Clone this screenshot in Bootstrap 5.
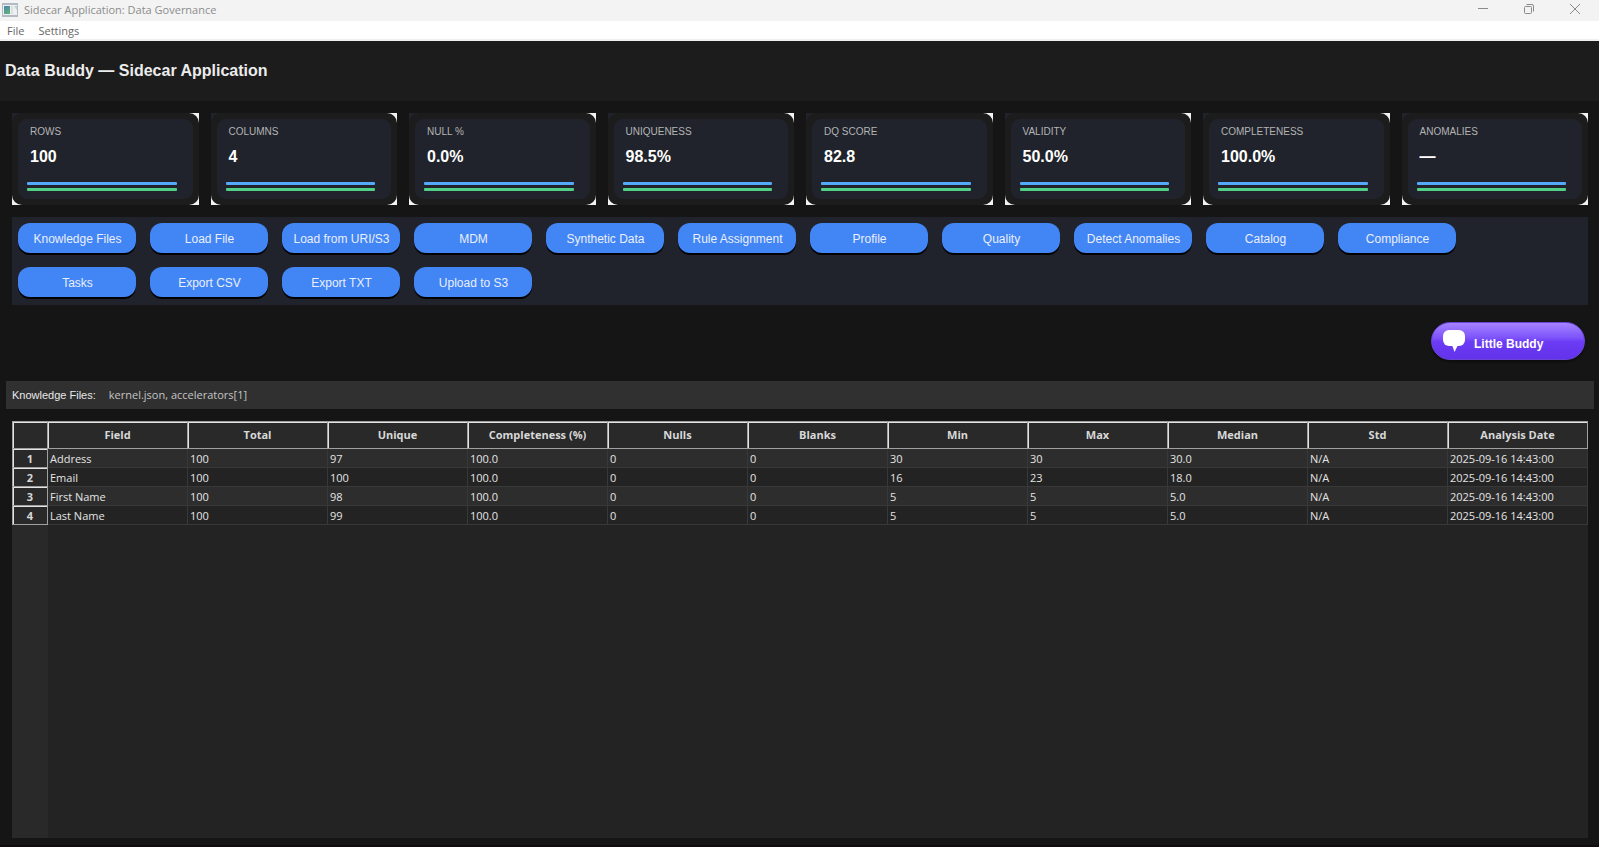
<!DOCTYPE html>
<html lang="en">
<head>
<meta charset="utf-8">
<meta name="viewport" content="width=device-width, initial-scale=1">
<title>Sidecar Application: Data Governance</title>
<link href="https://cdn.jsdelivr.net/npm/bootstrap@5.3.0/dist/css/bootstrap.min.css" rel="stylesheet">
<style>
:root{--ui:"Open Sans","Noto Sans",sans-serif;--arial:"Liberation Sans",Arial,sans-serif;--panel:#20232b;--light:#e3e3e3;--edge:#a0a0a0}
body{background:#151515;font-family:var(--arial);font-size:11px;line-height:16px;color:#e8e8e8;border-bottom:2px solid #100b0e}
.titlebar{background:#f3f3f3;color:#8c8c8c;font-family:var(--ui);height:21px;padding:0 1px 2px 2px;gap:6px}
.caption-btn{width:46px;height:18px;color:#8a8a8a;padding:0;border:0;background:none}
.caption-btn svg{display:block;margin:auto}
.menubar{background:#fff;border-bottom:2px solid #f0f0f0;font-family:var(--ui);height:20px;padding:2px 7px 0;gap:14px}
.menubar a{color:#666;text-decoration:none}
.app-head{background:#1c1c1c;padding:20px 5px}
.app-head h1{font-size:16px;line-height:20px;font-weight:700;color:#ececec;margin:0}
.metrics{padding:12px 11px 0 12px}
.metrics .row{--bs-gutter-x:12px}
.tile-corners{background:linear-gradient(var(--panel),var(--panel)) 0 0/10px 10px no-repeat,#f3f3f3}
.tile-frame{background:#1c1c1c;border-radius:10px;padding:6px}
.tile{background:var(--panel);border-radius:9px;height:80px;padding:5px 16px 6px 9px}
.tile-name{font-size:10px;color:#b4b4b4;padding-left:3px;white-space:nowrap}
.tile-value{font-size:16px;line-height:20px;font-weight:700;color:#fff;padding:0 3px;margin-top:7px}
.trend{height:3px;border-radius:1px;flex:none}
.trend-a{background:#55a9fa;margin-top:auto;margin-bottom:3px}
.trend-b{background:#52cf87;margin-bottom:2px}
.tools{background:var(--panel);margin:12px 11px 0 12px;padding:6px 6px 8px;gap:14px}
.tool-btn{width:118px;height:30px;padding:2px 0 0 1px;border:0;border-radius:12px;background:#4285f4;color:#e9effc;font-size:12px;line-height:16px;white-space:nowrap;box-shadow:0 2px 0 #000}
.buddy-row{padding:17px 14px 21px}
.buddy{width:154px;height:38px;padding:0 0 0 11px;gap:9px;border:1px solid #6a45d8;border-radius:19px;color:#fff;font-size:12px;font-weight:700;background:linear-gradient(#a583ff 0,#7c52fa 42%,#6c3bf5 52%,#6233ea 100%);box-shadow:0 2px 2px #0d0d10}
.buddy span{padding-top:6px}
.files{background:#303030;margin:0 5px 0 6px;padding:0 6px;height:28px;gap:13px}
.files output{font-family:var(--ui);color:#c4c4c4}
.sheet{margin:12px 11px 7px 12px;background:linear-gradient(90deg,#292929 36px,#232323 36px)}
.sheet table{table-layout:fixed;border-collapse:separate;border-spacing:0;width:100%;font-family:var(--ui);font-size:11px;line-height:16px;color:#e4e4e4}
.sheet th{background:#292929;color:#d8d8d8;text-align:center;font-weight:700;padding:0;border:0 solid var(--edge);border-width:0 1px 1px 0;box-shadow:inset 1px 1px var(--light)}
.sheet thead th{border-top-width:1px;height:28px}
.sheet th:first-child{border-left-width:1px;width:36px}
.sheet tbody th,.sheet td{height:19px}
.sheet tbody th{padding-top:2px}
.sheet td{padding:2px 2px 0;border:0 solid #383838;border-width:0 1px 1px 0;background:#232323;white-space:nowrap}
.sheet tbody tr:nth-child(odd) td{background:#2d2d2d}
</style>
</head>
<body class="d-flex flex-column min-vh-100">
<header>
  <div class="titlebar d-flex align-items-center">
    <svg width="16" height="14" viewBox="0 0 16 14" aria-hidden="true"><defs><linearGradient id="g" x2="0.4" y2="1"><stop stop-color="#4a86a8"/><stop offset="1" stop-color="#61ab84"/></linearGradient></defs><path fill="#b4bac4" d="M0 0h16v14H0z"/><path fill="#edf0f1" d="M1 2h14v10H1z"/><path fill="url(#g)" d="M2 3h6v8H2z"/><path fill="#dcdfe1" d="M9 3h2v8H9z"/><path fill="#b7d3d3" d="M12 3h3v4z"/></svg>
    <span class="me-auto">Sidecar Application: Data Governance</span>
    <div class="d-flex align-self-start">
      <button class="caption-btn" aria-label="Minimize"><svg width="10" height="10" viewBox="0 0 10 10"><path stroke="currentColor" d="M0 4.500h10"/></svg></button>
      <button class="caption-btn" aria-label="Restore"><svg width="10" height="10" viewBox="0 0 10 10" fill="none" stroke="currentColor"><rect x=".5" y="2.5" width="7" height="7" rx="1"/><path d="M2.500 .5H8q1.500 0 1.500 1.500V7.500"/></svg></button>
      <button class="caption-btn" aria-label="Close"><svg width="10" height="10" viewBox="0 0 10 10"><path stroke="currentColor" d="M0 0l10 10M10 0L0 10"/></svg></button>
    </div>
  </div>
  <nav class="menubar d-flex align-items-center" aria-label="Menu"><a href="#">File</a><a href="#">Settings</a></nav>
  <div class="app-head"><h1>Data Buddy — Sidecar Application</h1></div>
</header>
<main class="d-flex flex-column flex-grow-1">
  <section class="metrics" aria-label="Metrics">
    <div class="row">
      <div class="col"><div class="tile-corners"><div class="tile-frame"><div class="tile d-flex flex-column"><div class="tile-name">ROWS</div><div class="tile-value">100</div><div class="trend trend-a"></div><div class="trend trend-b"></div></div></div></div></div>
      <div class="col"><div class="tile-corners"><div class="tile-frame"><div class="tile d-flex flex-column"><div class="tile-name">COLUMNS</div><div class="tile-value">4</div><div class="trend trend-a"></div><div class="trend trend-b"></div></div></div></div></div>
      <div class="col"><div class="tile-corners"><div class="tile-frame"><div class="tile d-flex flex-column"><div class="tile-name">NULL %</div><div class="tile-value">0.0%</div><div class="trend trend-a"></div><div class="trend trend-b"></div></div></div></div></div>
      <div class="col"><div class="tile-corners"><div class="tile-frame"><div class="tile d-flex flex-column"><div class="tile-name">UNIQUENESS</div><div class="tile-value">98.5%</div><div class="trend trend-a"></div><div class="trend trend-b"></div></div></div></div></div>
      <div class="col"><div class="tile-corners"><div class="tile-frame"><div class="tile d-flex flex-column"><div class="tile-name">DQ SCORE</div><div class="tile-value">82.8</div><div class="trend trend-a"></div><div class="trend trend-b"></div></div></div></div></div>
      <div class="col"><div class="tile-corners"><div class="tile-frame"><div class="tile d-flex flex-column"><div class="tile-name">VALIDITY</div><div class="tile-value">50.0%</div><div class="trend trend-a"></div><div class="trend trend-b"></div></div></div></div></div>
      <div class="col"><div class="tile-corners"><div class="tile-frame"><div class="tile d-flex flex-column"><div class="tile-name">COMPLETENESS</div><div class="tile-value">100.0%</div><div class="trend trend-a"></div><div class="trend trend-b"></div></div></div></div></div>
      <div class="col"><div class="tile-corners"><div class="tile-frame"><div class="tile d-flex flex-column"><div class="tile-name">ANOMALIES</div><div class="tile-value">—</div><div class="trend trend-a"></div><div class="trend trend-b"></div></div></div></div></div>
    </div>
  </section>
  <section class="tools d-flex flex-wrap" aria-label="Actions">
    <button class="tool-btn">Knowledge Files</button>
    <button class="tool-btn">Load File</button>
    <button class="tool-btn">Load from URI/S3</button>
    <button class="tool-btn">MDM</button>
    <button class="tool-btn">Synthetic Data</button>
    <button class="tool-btn">Rule Assignment</button>
    <button class="tool-btn">Profile</button>
    <button class="tool-btn">Quality</button>
    <button class="tool-btn">Detect Anomalies</button>
    <button class="tool-btn">Catalog</button>
    <button class="tool-btn">Compliance</button>
    <button class="tool-btn">Tasks</button>
    <button class="tool-btn">Export CSV</button>
    <button class="tool-btn">Export TXT</button>
    <button class="tool-btn">Upload to S3</button>
  </section>
  <div class="buddy-row d-flex justify-content-end">
    <button class="buddy d-flex align-items-center"><svg width="22" height="22" viewBox="0 0 22 22" fill="#fff" aria-hidden="true"><rect width="22" height="16" rx="6"/><path d="M9 15h6l-3.500 7z"/></svg><span>Little Buddy</span></button>
  </div>
  <div class="files d-flex align-items-center"><label for="kf">Knowledge Files:</label><output id="kf">kernel.json, accelerators[1]</output></div>
  <section class="sheet flex-grow-1" aria-label="Field profile">
    <table>
      <thead><tr><th></th><th scope="col">Field</th><th scope="col">Total</th><th scope="col">Unique</th><th scope="col">Completeness (%)</th><th scope="col">Nulls</th><th scope="col">Blanks</th><th scope="col">Min</th><th scope="col">Max</th><th scope="col">Median</th><th scope="col">Std</th><th scope="col">Analysis Date</th></tr></thead>
      <tbody>
        <tr><th scope="row">1</th><td>Address</td><td>100</td><td>97</td><td>100.0</td><td>0</td><td>0</td><td>30</td><td>30</td><td>30.0</td><td>N/A</td><td>2025-09-16 14:43:00</td></tr>
        <tr><th scope="row">2</th><td>Email</td><td>100</td><td>100</td><td>100.0</td><td>0</td><td>0</td><td>16</td><td>23</td><td>18.0</td><td>N/A</td><td>2025-09-16 14:43:00</td></tr>
        <tr><th scope="row">3</th><td>First Name</td><td>100</td><td>98</td><td>100.0</td><td>0</td><td>0</td><td>5</td><td>5</td><td>5.0</td><td>N/A</td><td>2025-09-16 14:43:00</td></tr>
        <tr><th scope="row">4</th><td>Last Name</td><td>100</td><td>99</td><td>100.0</td><td>0</td><td>0</td><td>5</td><td>5</td><td>5.0</td><td>N/A</td><td>2025-09-16 14:43:00</td></tr>
      </tbody>
    </table>
  </section>
</main>
<script src="https://cdn.jsdelivr.net/npm/bootstrap@5.3.0/dist/js/bootstrap.bundle.min.js"></script>
</body>
</html>
